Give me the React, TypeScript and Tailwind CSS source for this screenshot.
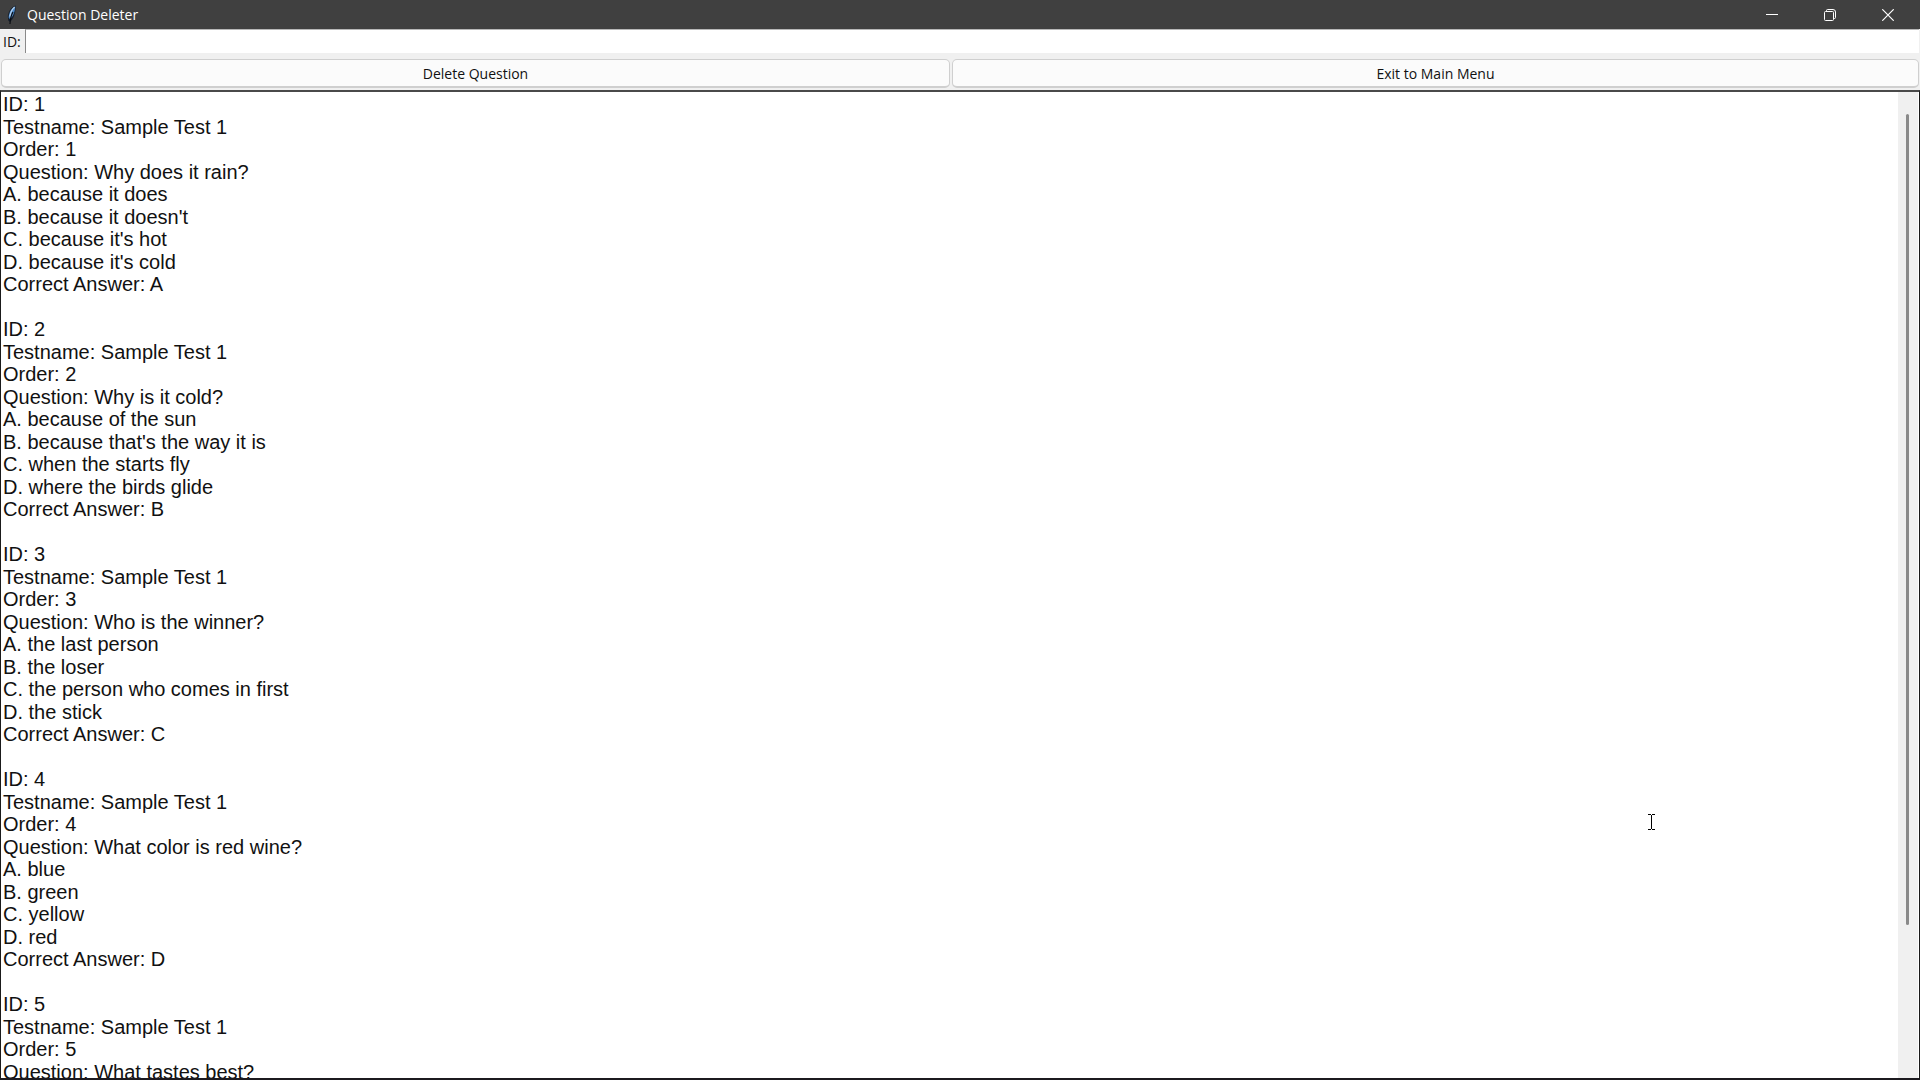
import { useState } from "react";

type Question = {
  id: number;
  testname: string;
  order: number;
  question: string;
  answers: string[];
  correct: string;
};

const questions: Question[] = [
  {
    id: 1,
    testname: "Sample Test 1",
    order: 1,
    question: "Why does it rain?",
    answers: ["because it does", "because it doesn't", "because it's hot", "because it's cold"],
    correct: "A",
  },
  {
    id: 2,
    testname: "Sample Test 1",
    order: 2,
    question: "Why is it cold?",
    answers: ["because of the sun", "because that's the way it is", "when the starts fly", "where the birds glide"],
    correct: "B",
  },
  {
    id: 3,
    testname: "Sample Test 1",
    order: 3,
    question: "Who is the winner?",
    answers: ["the last person", "the loser", "the person who comes in first", "the stick"],
    correct: "C",
  },
  {
    id: 4,
    testname: "Sample Test 1",
    order: 4,
    question: "What color is red wine?",
    answers: ["blue", "green", "yellow", "red"],
    correct: "D",
  },
  {
    id: 5,
    testname: "Sample Test 1",
    order: 5,
    question: "What tastes best?",
    answers: [],
    correct: "",
  },
];

function toLines(q: Question) {
  const lines = [`ID: ${q.id}`, `Testname: ${q.testname}`, `Order: ${q.order}`, `Question: ${q.question}`];
  q.answers.forEach((answer, i) => lines.push(`${"ABCD"[i]}. ${answer}`));
  if (q.correct) lines.push(`Correct Answer: ${q.correct}`);
  return lines;
}

function FeatherIcon() {
  return (
    <svg className="h-5 w-3" viewBox="0 0 12 20" fill="none">
      <path d="M9.8 0.6C6 1.6 2.6 5.6 1.8 11L2.2 15.4L4 17C7.4 14.4 9.8 8.4 9.8 0.6Z" fill="#17212f" />
      <path d="M9.2 1.4C5.6 3 3 7 2.6 12.6L3.8 14C7 11.6 9 7 9.2 1.4Z" fill="#4a86c5" />
      <path d="M8.6 2C6.2 4.2 4.4 7.8 3.8 11.6" stroke="#b5d2ee" strokeWidth="1.2" />
      <path d="M7 7C5 10.4 4.2 14 4 19" stroke="#0a0d12" strokeWidth="1.2" />
    </svg>
  );
}

function TitleBar() {
  return (
    <header className="flex h-[29px] shrink-0 items-center bg-[#404040] pl-[6px] text-white">
      <FeatherIcon />
      <h1 className="ml-[9px] flex-1 text-[14px] leading-[18px]">Question Deleter</h1>
      <button aria-label="Minimize" className="flex h-full w-[58px] items-center justify-center">
        <svg className="h-3 w-3" viewBox="0 0 12 12" stroke="currentColor">
          <path d="M0 5.5H12" />
        </svg>
      </button>
      <button aria-label="Restore" className="flex h-full w-[58px] items-center justify-center">
        <svg className="h-3 w-3" viewBox="0 0 12 12" fill="none" stroke="currentColor">
          <rect x="0.5" y="2.5" width="9" height="9" rx="1" />
          <path d="M2.5 2.5V1.5Q2.5 0.5 3.5 0.5H9Q11.5 0.5 11.5 3V8.5Q11.5 9.5 10.5 9.5H9.5" />
        </svg>
      </button>
      <button aria-label="Close" className="mr-[3px] flex h-full w-[58px] items-center justify-center">
        <svg className="h-3 w-3" viewBox="0 0 12 12" stroke="currentColor" strokeWidth="1.2">
          <path d="M0.3 0.3L11.7 11.7M11.7 0.3L0.3 11.7" />
        </svg>
      </button>
    </header>
  );
}

const buttonClass = "h-[29px] rounded-[5px] border border-b-2 border-[#cfcfcf] bg-[#fbfbfb] pt-px text-[14px] leading-5";

export default function App() {
  const [id, setId] = useState("");

  return (
    <div className="relative flex h-screen flex-col overflow-hidden bg-[#f0f0f0] font-['Open_Sans','Noto_Sans',sans-serif] text-[#111]">
      <TitleBar />

      <form className="shrink-0" onSubmit={(e) => e.preventDefault()}>
        <div className="flex h-[24px] items-stretch">
          <label htmlFor="question-id" className="w-[25px] pl-[3px] text-[14px] leading-[26px]">
            ID:
          </label>
          <input
            id="question-id"
            value={id}
            onChange={(e) => setId(e.target.value)}
            className="mr-px min-w-0 flex-1 border-t border-l border-t-[#b8b8b8] border-l-[#8a8a8a] bg-white px-1 text-[14px] outline-none"
          />
        </div>
        <div className="mt-[6px] grid grid-cols-[949fr_967fr] gap-[2px] px-px">
          <button type="submit" className={buttonClass}>
            Delete Question
          </button>
          <button type="button" className={buttonClass}>
            Exit to Main Menu
          </button>
        </div>
      </form>

      <main className="mt-[2px] flex min-h-0 flex-1 border-x border-t-2 border-b-2 border-t-[#4a4a4a] border-r-[#1a1a1a] border-b-[#1c1a1f] border-l-[#1a1a1a] bg-white">
        <div className="min-w-0 flex-1 overflow-hidden pt-px pl-0.5 font-['Liberation_Sans',Arial,sans-serif] text-[20px]">
          {questions.map((q) => (
            <div key={q.id} className="mb-[22px]">
              {toLines(q).map((line) => (
                <p key={line} className="leading-[23px] even:leading-[22px]">
                  {line}
                </p>
              ))}
            </div>
          ))}
        </div>

        {/* Scrollbar */}
        <div className="mr-px flex w-5 flex-col items-center bg-[#f0f0f0] pt-[22px] pr-[2px]">
          <div className="w-[3px] flex-[811] rounded-full bg-[#8a8a8a]" />
          <div className="flex-[153]" />
        </div>
      </main>

      {/* Text cursor */}
      <svg className="pointer-events-none absolute top-[814px] left-[1648px] h-4 w-[7px]" viewBox="0 0 7 16" fill="none" stroke="#000">
        <path d="M0 0.5H3M4 0.5H7M3.5 1V15M0 15.5H3M4 15.5H7" />
      </svg>
    </div>
  );
}
